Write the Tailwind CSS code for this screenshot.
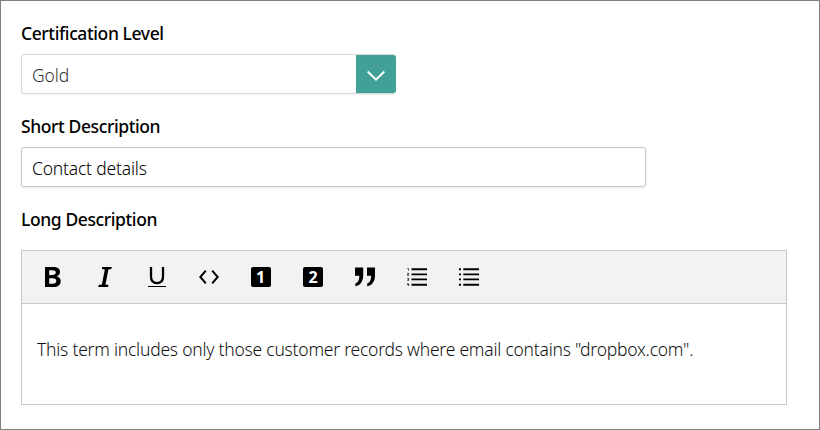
<!DOCTYPE html>
<html lang="en">
<head>
<meta charset="utf-8">
<title>Term details</title>
<script src="https://cdn.jsdelivr.net/npm/@tailwindcss/browser@4"></script>
</head>
<body class="bg-white font-['Noto_Sans','Open_Sans',sans-serif] text-black">
<form class="flex h-[430px] w-[820px] flex-col border border-[#7f7f7f] pt-[21px] pl-5">
  <div class="flex h-[93px] flex-col">
    <label class="h-8 whitespace-nowrap text-[17.5px] leading-[23px] font-medium tracking-[-0.4px]"><span>Certification Level</span></label>
    <div class="flex h-10 w-[375px] rounded-[3px] border border-[#d2d9d8] shadow-[0_1px_2px_rgba(0,0,0,0.06)]">
      <div class="flex-1 pl-2.5 text-[17.5px] leading-[40px] font-light tracking-[-0.1px] text-[#333]"><span>Gold</span></div>
      <button type="button" aria-label="Open" class="-mr-px flex w-10 items-center justify-center rounded-r-[3px] bg-[#42a196]">
        <svg class="mt-[3px] h-3 w-5" viewBox="0 0 20 12" fill="none" stroke="white" stroke-width="2"><path d="M1.7 1.5L10 9.7L18.3 1.5"/></svg>
      </button>
    </div>
  </div>
  <div class="flex h-[93px] flex-col">
    <label class="h-8 whitespace-nowrap text-[17.5px] leading-[23px] font-medium tracking-[-0.4px]"><span>Short Description</span></label>
    <div class="h-10 w-[625px] rounded-[3px] border border-[#c8c8c8] pl-2.5 text-[17.5px] leading-[40px] font-light tracking-[-0.2px] shadow-[0_1px_3px_rgba(0,0,0,0.10)]"><span>Contact details</span></div>
  </div>
  <label class="h-[42px] whitespace-nowrap text-[17.5px] leading-[23px] font-medium tracking-[-0.4px]"><span>Long Description</span></label>
  <div class="flex h-[155px] w-[766px] flex-col border border-[#c8c8c8]">
    <div class="flex h-[53px] items-center gap-8 border-b border-[#c8c8c8] bg-[#f2f2f0] pl-[21px]">
      <svg class="size-5" viewBox="0 0 20 20"><path fill-rule="evenodd" d="M2 0H10C14.6 0 17 1.7 17 5C17 7.3 15.8 8.9 13.7 9.4C16.3 9.9 17.7 11.5 17.7 14.2C17.7 18 14.9 20 10.4 20H2ZM6.2 3.3V8H9.4C11.7 8 12.8 7.1 12.8 5.5C12.8 4 11.7 3.3 9.3 3.3ZM6.2 11.3V16.7H9.8C12.2 16.7 13.3 15.7 13.3 13.9C13.3 12.1 12.1 11.3 9.6 11.3Z"/></svg>
      <svg class="size-5" viewBox="0 0 20 20"><path d="M7.3 0H16.8L16.3 2L13.4 2.5L10.5 17.5L13.5 18L13 20H3.2L3.7 18L6.9 17.5L9.8 2.5L6.9 2Z"/></svg>
      <svg class="size-5" viewBox="0 0 20 20"><path d="M4 0V9.5C4 14 6.2 16.1 10 16.1C13.8 16.1 16 14 16 9.5V0" fill="none" stroke="black" stroke-width="2.3"/><path d="M1 19H19V20H1Z"/></svg>
      <svg class="size-5" viewBox="0 0 20 20" fill="none" stroke="black" stroke-width="2"><path d="M6.8 3.7L1.3 10L6.8 16.3M13.2 3.7L18.7 10L13.2 16.3"/></svg>
      <span class="flex size-5 items-center justify-center rounded-[2px] bg-black pr-px text-[16px] leading-5 font-bold text-white">1</span>
      <span class="flex size-5 items-center justify-center rounded-[2px] bg-black text-[16px] leading-5 font-bold text-white">2</span>
      <svg class="size-5" viewBox="0 0 20 20"><path d="M0 0.4H8.2V8C8.2 14.4 5.7 18.2 0.4 19.2V16.5C3.1 15.5 4.3 13.2 4.3 8.8H0Z"/><path d="M12 0.4H20V8C20 14.4 17.5 18.2 12.2 19.2V16.5C14.9 15.5 16.1 13.2 16.1 8.8H12Z"/></svg>
      <svg class="size-5" viewBox="0 0 20 20"><path d="M4.5 1.3H20V3.3H4.5ZM4.5 6.5H20V8.3H4.5ZM4.5 11.5H20V13.3H4.5ZM4.5 16.7H20V18.7H4.5Z"/><path d="M.3 1.5H1.5V3.6M.3 6.3H1.7V7.2H.5V8.4H2M.3 11.3H1.7V13.4H.3M.7 12.3H1.7M.5 16.3V17.7H2M1.6 16.5V19" fill="none" stroke="#222" stroke-width=".8"/></svg>
      <svg class="size-5" viewBox="0 0 20 20"><path d="M4.3 1.3H20V3.3H4.3ZM4.3 6.5H20V8.3H4.3ZM4.3 11.5H20V13.3H4.3ZM4.3 16.7H20V18.7H4.3ZM0 1.3H2V3.3H0ZM0 6.5H2V8.3H0ZM0 11.5H2V13.3H0ZM0 16.7H2V18.7H0Z"/></svg>
    </div>
    <div class="pt-[33px] pl-[15px] text-[17.5px] leading-6 font-light tracking-[-0.23px] whitespace-nowrap text-[#111]"><span>This term includes only those customer records where email contains "dropbox.com".</span></div>
  </div>
</form>
</body>
</html>
